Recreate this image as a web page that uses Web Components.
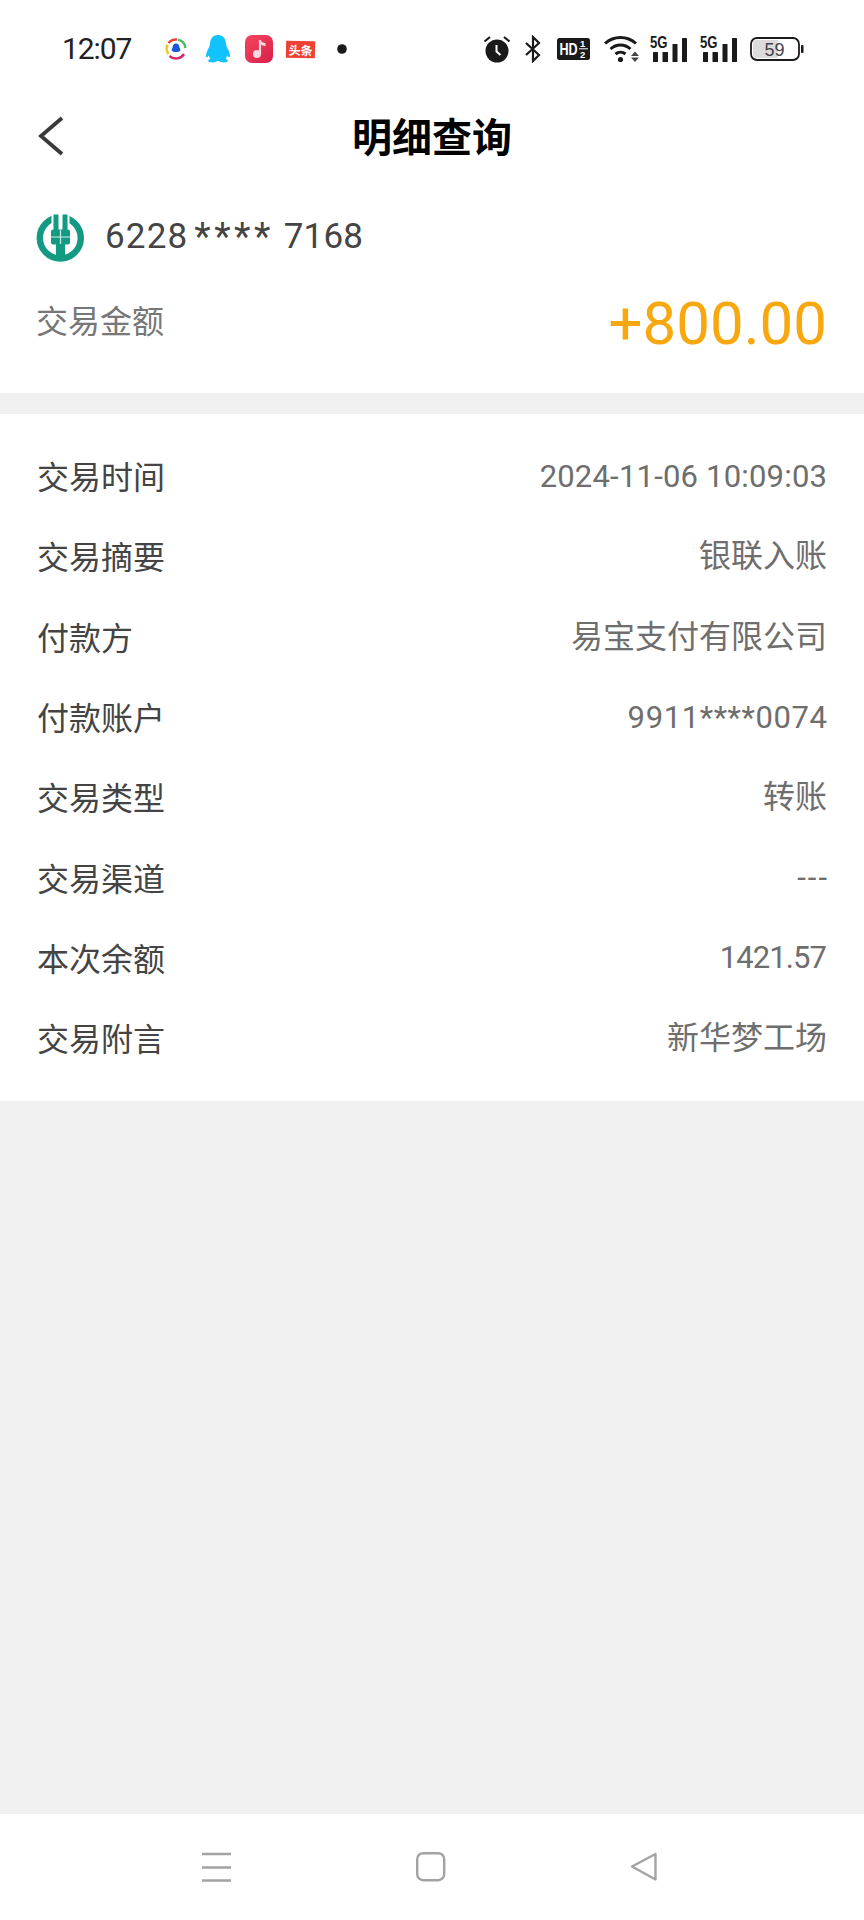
<!DOCTYPE html>
<html lang="zh">
<head>
<meta charset="utf-8">
<title>明细查询</title>
<style>
    html, body { margin: 0; padding: 0; }
    body { width: 864px; height: 1920px; overflow: hidden; background: #f0f0f0;
        font-family: Roboto, "Noto Sans CJK SC", sans-serif; }
    #screen { display: flex; flex-direction: column; height: 1920px; }
    #filler { flex: 1; }
</style>
</head>
<body>
<div id="screen">
    <status-bar></status-bar>
    <title-bar>明细查询</title-bar>
    <amount-card card="6228 **** 7168" label="交易金额" amount="+800.00"></amount-card>
    <detail-list>
        <detail-row label="交易时间" style="--vs:31px;--ls:.2px">2024-11-06 10:09:03</detail-row>
        <detail-row label="交易摘要">银联入账</detail-row>
        <detail-row label="付款方">易宝支付有限公司</detail-row>
        <detail-row label="付款账户" style="--vs:31px;--ls:.6px">9911****0074</detail-row>
        <detail-row label="交易类型">转账</detail-row>
        <detail-row label="交易渠道" style="--vs:31px;--ls:2px">---</detail-row>
        <detail-row label="本次余额" style="--vs:31px;--ls:-.9px">1421.57</detail-row>
        <detail-row label="交易附言">新华梦工场</detail-row>
    </detail-list>
    <div id="filler"></div>
    <system-nav></system-nav>
</div>

<script>
const statusTemplate = document.createElement('template');
statusTemplate.innerHTML = `
    <style>
        :host { display: flex; align-items: center; height: 98px; background: #fff; box-sizing: border-box; padding: 0 60px 0 62px; color: #1c1c1c; }
        #time { font: 400 30px/1 Roboto, sans-serif; letter-spacing: -1.1px; width: 102px; color: #222; }
        svg { display: block; flex: none; }
        #left { display: flex; align-items: center; }
        #right { margin-left: auto; display: flex; align-items: center; }
        text { font-family: "Liberation Sans", sans-serif; }
        #tt { display: block; width: 29px; height: 17px; margin-right: 22px; background: #ee4136; color: #fff; font: 700 12px/17px "Noto Sans CJK SC", sans-serif; text-align: center; transform: rotate(1deg); }
    </style>
    <span id="time">12:07</span>
    <div id="left">
        <svg width="24" height="24" viewBox="0 0 24 24" style="margin-right:17px">
            <g fill="none" stroke-width="2.400">
                <path d="M4.500 17A9.500 9.500 0 0 1 3.500 7.500" stroke="#f2c521"/>
                <path d="M4.500 6A9.500 9.500 0 0 1 13 2.500" stroke="#e8433a"/>
                <path d="M14 2.700A9.500 9.500 0 0 1 21.500 11" stroke="#45bd62"/>
                <path d="M5.500 19A9.500 9.500 0 0 0 20 17" stroke="#d12a6a"/>
            </g>
            <path d="M12 6.500c2.400 0 3.400 2 3.400 4 .8 1.300 1.300 3 .5 3.500-1 .6-2.200 1-3.900 1s-2.900-.4-3.900-1c-.8-.5-.3-2.200.5-3.500 0-2 1-4 3.400-4z" fill="#1958d6"/>
        </svg>
        <svg width="26" height="28" viewBox="0 0 26 28" style="margin-right:14px">
            <path d="M13 0c5.500 0 7.800 4.300 8 9 .1 2.200 1.300 3.600 2.600 6.500 1.500 3.500 1.700 6.300.9 6.700-.7.300-1.700-.7-2.300-1.700-.3 1.300-1 2.500-1.700 3.200 1.500.6 2.600 1.400 2.300 2.400-.3 1-2 1.400-4.300 1.400-2.400 0-4-.7-4.500-1.400h-2c-.5.700-2.100 1.400-4.500 1.400-2.300 0-4-.4-4.300-1.400-.3-1 .8-1.800 2.300-2.400-.7-.7-1.400-1.900-1.700-3.200-.6 1-1.600 2-2.300 1.700-.8-.4-.6-3.200.9-6.700C3.700 12.600 4.900 11.200 5 9c.2-4.700 2.500-9 8-9z" fill="#12c2fb"/>
        </svg>
        <svg width="28" height="28" viewBox="0 0 28 28" style="margin-right:13px">
            <defs><linearGradient id="mg" x1="0" y1="0" x2="1" y2="1"><stop offset="0" stop-color="#f5475f"/><stop offset="1" stop-color="#d81e4a"/></linearGradient></defs>
            <rect width="28" height="28" rx="7" fill="url(#mg)"/>
            <path d="M15 5v14" stroke="#fbd7de" stroke-width="2.200" fill="none"/>
            <path d="M15 4.500c.8 2.500 3 3 5.500 3.800v3c-2.500-.5-4.500-1.300-5.500-2.800z" fill="#fbd7de"/>
            <circle cx="12" cy="19" r="4" fill="#fbd7de"/>
        </svg>
        <span id="tt">头条</span>
        <svg width="10" height="10" viewBox="0 0 10 10"><circle cx="5" cy="5" r="4.800" fill="#1a1a1a"/></svg>
    </div>
    <div id="right">
        <svg width="28" height="28" viewBox="0 0 28 28" style="margin-right:13px">
            <circle cx="14" cy="16" r="11.500" fill="#1a1a1a"/>
            <path d="M13.500 10v6.500l4 3.500" stroke="#fff" stroke-width="2" fill="none"/>
            <path d="M1.500 6.500L7 2M26.500 6.500L21 2" stroke="#1a1a1a" stroke-width="2.200" fill="none"/>
        </svg>
        <svg width="18" height="28" viewBox="0 0 18 28" style="margin-right:15px">
            <path d="M2 8l13 12-6 6V2l6 6L2 20" stroke="#1a1a1a" stroke-width="2.200" fill="none"/>
        </svg>
        <svg width="33" height="22" viewBox="0 0 33 22" style="margin-right:14px">
            <rect width="33" height="22" rx="2.500" fill="#1a1a1a"/>
            <text transform="translate(2.500 17) scale(.74 1)" font-size="17" font-weight="700" fill="#fff">HD</text>
            <text x="23" y="9" font-size="9.500" font-weight="700" fill="#fff">1</text>
            <path d="M22 10.800h9" stroke="#fff" stroke-width="1"/>
            <text x="23" y="20" font-size="9.500" font-weight="700" fill="#fff">2</text>
        </svg>
        <svg width="36" height="28" viewBox="0 0 36 28" style="margin-right:10px">
            <g fill="none" stroke="#1a1a1a" stroke-width="3">
                <path d="M1 8.500C10 .5 23 .5 32 8.500"/>
                <path d="M6.500 14c6-5.300 14-5.300 20 0"/>
                <path d="M11.500 19c3-2.500 7-2.500 10 0"/>
            </g>
            <circle cx="16.500" cy="24.500" r="2.600" fill="#1a1a1a"/>
            <path d="M27 21l4-4.500 4 4.500zM27 22.500l4 4.500 4-4.500z" fill="#444"/>
        </svg>
        <signal-icon style="margin-right:12px"></signal-icon>
        <signal-icon style="margin-right:12px"></signal-icon>
        <svg width="54" height="24" viewBox="0 0 54 24">
            <rect x="1" y="1" width="48" height="22" rx="6" fill="#fff" stroke="#1a1a1a" stroke-width="1.800"/>
            <path d="M3 7a4 4 0 0 1 4-4h21v18H7a4 4 0 0 1-4-4z" fill="#dcdcdc"/>
            <rect x="51" y="8" width="2.500" height="8" rx="1" fill="#1a1a1a"/>
            <text x="14.500" y="18.500" font-size="18" fill="#444">59</text>
        </svg>
    </div>
`;

class SignalIcon extends HTMLElement {
    constructor() {
        super();
        this.attachShadow({ mode: 'open' }).innerHTML = `
            <style>
                :host { display: block; width: 38px; height: 34px; }
                svg { display: block; }
                text { font-family: "Liberation Sans", sans-serif; }
            </style>
            <svg width="38" height="34" viewBox="0 -3 38 34">
                <text transform="translate(0 12.500) scale(.82 1)" font-size="16" font-weight="700" fill="#1a1a1a">5G</text>
                <rect x="3" y="17" width="5" height="10" rx=".6" fill="#1a1a1a"/>
                <rect x="12.500" y="17" width="5.500" height="10" rx=".6" fill="#1a1a1a"/>
                <rect x="22.500" y="9" width="5" height="18" rx=".6" fill="#1a1a1a"/>
                <rect x="32" y="3" width="5" height="24" rx=".6" fill="#1a1a1a"/>
            </svg>`;
    }
}
customElements.define('signal-icon', SignalIcon);

class StatusBar extends HTMLElement {
    constructor() {
        super();
        this._shadowRoot = this.attachShadow({ mode: 'open' });
        this._shadowRoot.appendChild(statusTemplate.content.cloneNode(true));
    }
}
customElements.define('status-bar', StatusBar);

class TitleBar extends HTMLElement {
    constructor() {
        super();
        this.attachShadow({ mode: 'open' }).innerHTML = `
            <style>
                :host { display: flex; align-items: center; justify-content: center; position: relative; height: 78px; background: #fff; }
                #title { font: 700 40px/1 "Noto Sans CJK SC", sans-serif; color: #000; margin-bottom: 4px; }
                svg { position: absolute; left: 37px; top: 18px; }
            </style>
            <svg width="28" height="40" viewBox="0 0 28 40">
                <path d="M25 2L4 20l21 18" fill="none" stroke="#3a3a3a" stroke-width="3.800"/>
            </svg>
            <span id="title"><slot></slot></span>`;
    }
}
customElements.define('title-bar', TitleBar);

class AmountCard extends HTMLElement {
    constructor() {
        super();
        this.attachShadow({ mode: 'open' }).innerHTML = `
            <style>
                :host { display: block; height: 217px; background: #fff; box-sizing: border-box; padding: 37px 37px 0 36px; }
                #card { display: flex; align-items: center; gap: 20px; height: 48px; }
                #num { font: 400 35px/1 Roboto, sans-serif; color: #444; white-space: pre; }
                #head { letter-spacing: 1.2px; }
                #mask { font-size: 38px; line-height: 1; vertical-align: -2px; letter-spacing: 3.6px; margin-left: -3px; }
                #tail { letter-spacing: .2px; margin-left: 1px; }
                #line { display: flex; align-items: center; justify-content: space-between; margin-top: 23px; height: 70px; }
                #label { font: 400 32px/1 "Noto Sans CJK SC", sans-serif; color: #777; }
                #amt { font: 400 60px/1 Roboto, sans-serif; color: #f8a80f; padding-top: 9px; }
                svg { flex: none; }
            </style>
            <div id="card">
                <svg width="49" height="49" viewBox="0 0 49 49">
                    <circle cx="24.300" cy="25" r="20.500" fill="none" stroke="#129a82" stroke-width="6.400"/>
                    <rect x="15.500" y="0" width="18" height="17" fill="#fff"/>
                    <path d="M17.500 1.500h5v16h-5zM26.500 1.500h5v16h-5z" fill="#129a82"/>
                    <rect x="15" y="16.500" width="19" height="15" rx="2" fill="#129a82"/>
                    <rect x="20" y="30" width="9" height="16" fill="#129a82"/>
                    <path d="M15 24h19M24.500 17v14" stroke="#cdeee6" stroke-width="1.200"/>
                </svg>
                <span id="num"><span id="head"></span> <span id="mask"></span> <span id="tail"></span></span>
            </div>
            <div id="line">
                <span id="label"></span>
                <span id="amt"></span>
            </div>`;
        const parts = this.getAttribute('card').split(' ');
        this.shadowRoot.getElementById('head').textContent = parts[0];
        this.shadowRoot.getElementById('mask').textContent = parts[1];
        this.shadowRoot.getElementById('tail').textContent = parts[2];
        this.shadowRoot.getElementById('label').textContent = this.getAttribute('label');
        this.shadowRoot.getElementById('amt').textContent = this.getAttribute('amount');
    }
}
customElements.define('amount-card', AmountCard);

class DetailList extends HTMLElement {
    constructor() {
        super();
        this.attachShadow({ mode: 'open' }).innerHTML = `
            <style>
                :host { display: block; background: #fff; margin-top: 21px; padding: 22px 0 23px; }
            </style>
            <slot></slot>`;
    }
}
customElements.define('detail-list', DetailList);

class DetailRow extends HTMLElement {
    constructor() {
        super();
        this.attachShadow({ mode: 'open' }).innerHTML = `
            <style>
                :host { display: flex; align-items: center; justify-content: space-between; height: 80.3px; padding: 0 37px; }
                #k { font: 400 32px/1 "Noto Sans CJK SC", sans-serif; color: #444; margin-bottom: 2px; }
                #v { font: 400 var(--vs, 32px)/1 Roboto, "Noto Sans CJK SC", sans-serif; color: #6e6e6e; letter-spacing: var(--ls, 0); margin-right: calc(-1 * var(--ls, 0px)); }
            </style>
            <span id="k"></span>
            <span id="v"><slot></slot></span>`;
        this.shadowRoot.getElementById('k').textContent = this.getAttribute('label');
    }
}
customElements.define('detail-row', DetailRow);

class SystemNav extends HTMLElement {
    constructor() {
        super();
        this.attachShadow({ mode: 'open' }).innerHTML = `
            <style>
                :host { display: flex; align-items: center; justify-content: space-between; height: 106px; box-sizing: border-box; background: #fff; padding: 0 206px 0 202px; }
                svg { display: block; }
            </style>
            <svg width="30" height="30" viewBox="0 0 30 30">
                <path d="M0 2h29M0 15.500h29M0 28.500h29" stroke="#a3a3a3" stroke-width="2.400" fill="none"/>
            </svg>
            <svg width="30" height="30" viewBox="0 0 30 30">
                <rect x="1.200" y="1.200" width="27" height="27" rx="6" fill="none" stroke="#a3a3a3" stroke-width="2.400"/>
            </svg>
            <svg width="28" height="30" viewBox="0 0 28 30">
                <path d="M25.500 2L2 14.500 25.500 27.500z" fill="none" stroke="#a3a3a3" stroke-width="2.400" stroke-linejoin="round"/>
            </svg>`;
    }
}
customElements.define('system-nav', SystemNav);
</script>
</body>
</html>
